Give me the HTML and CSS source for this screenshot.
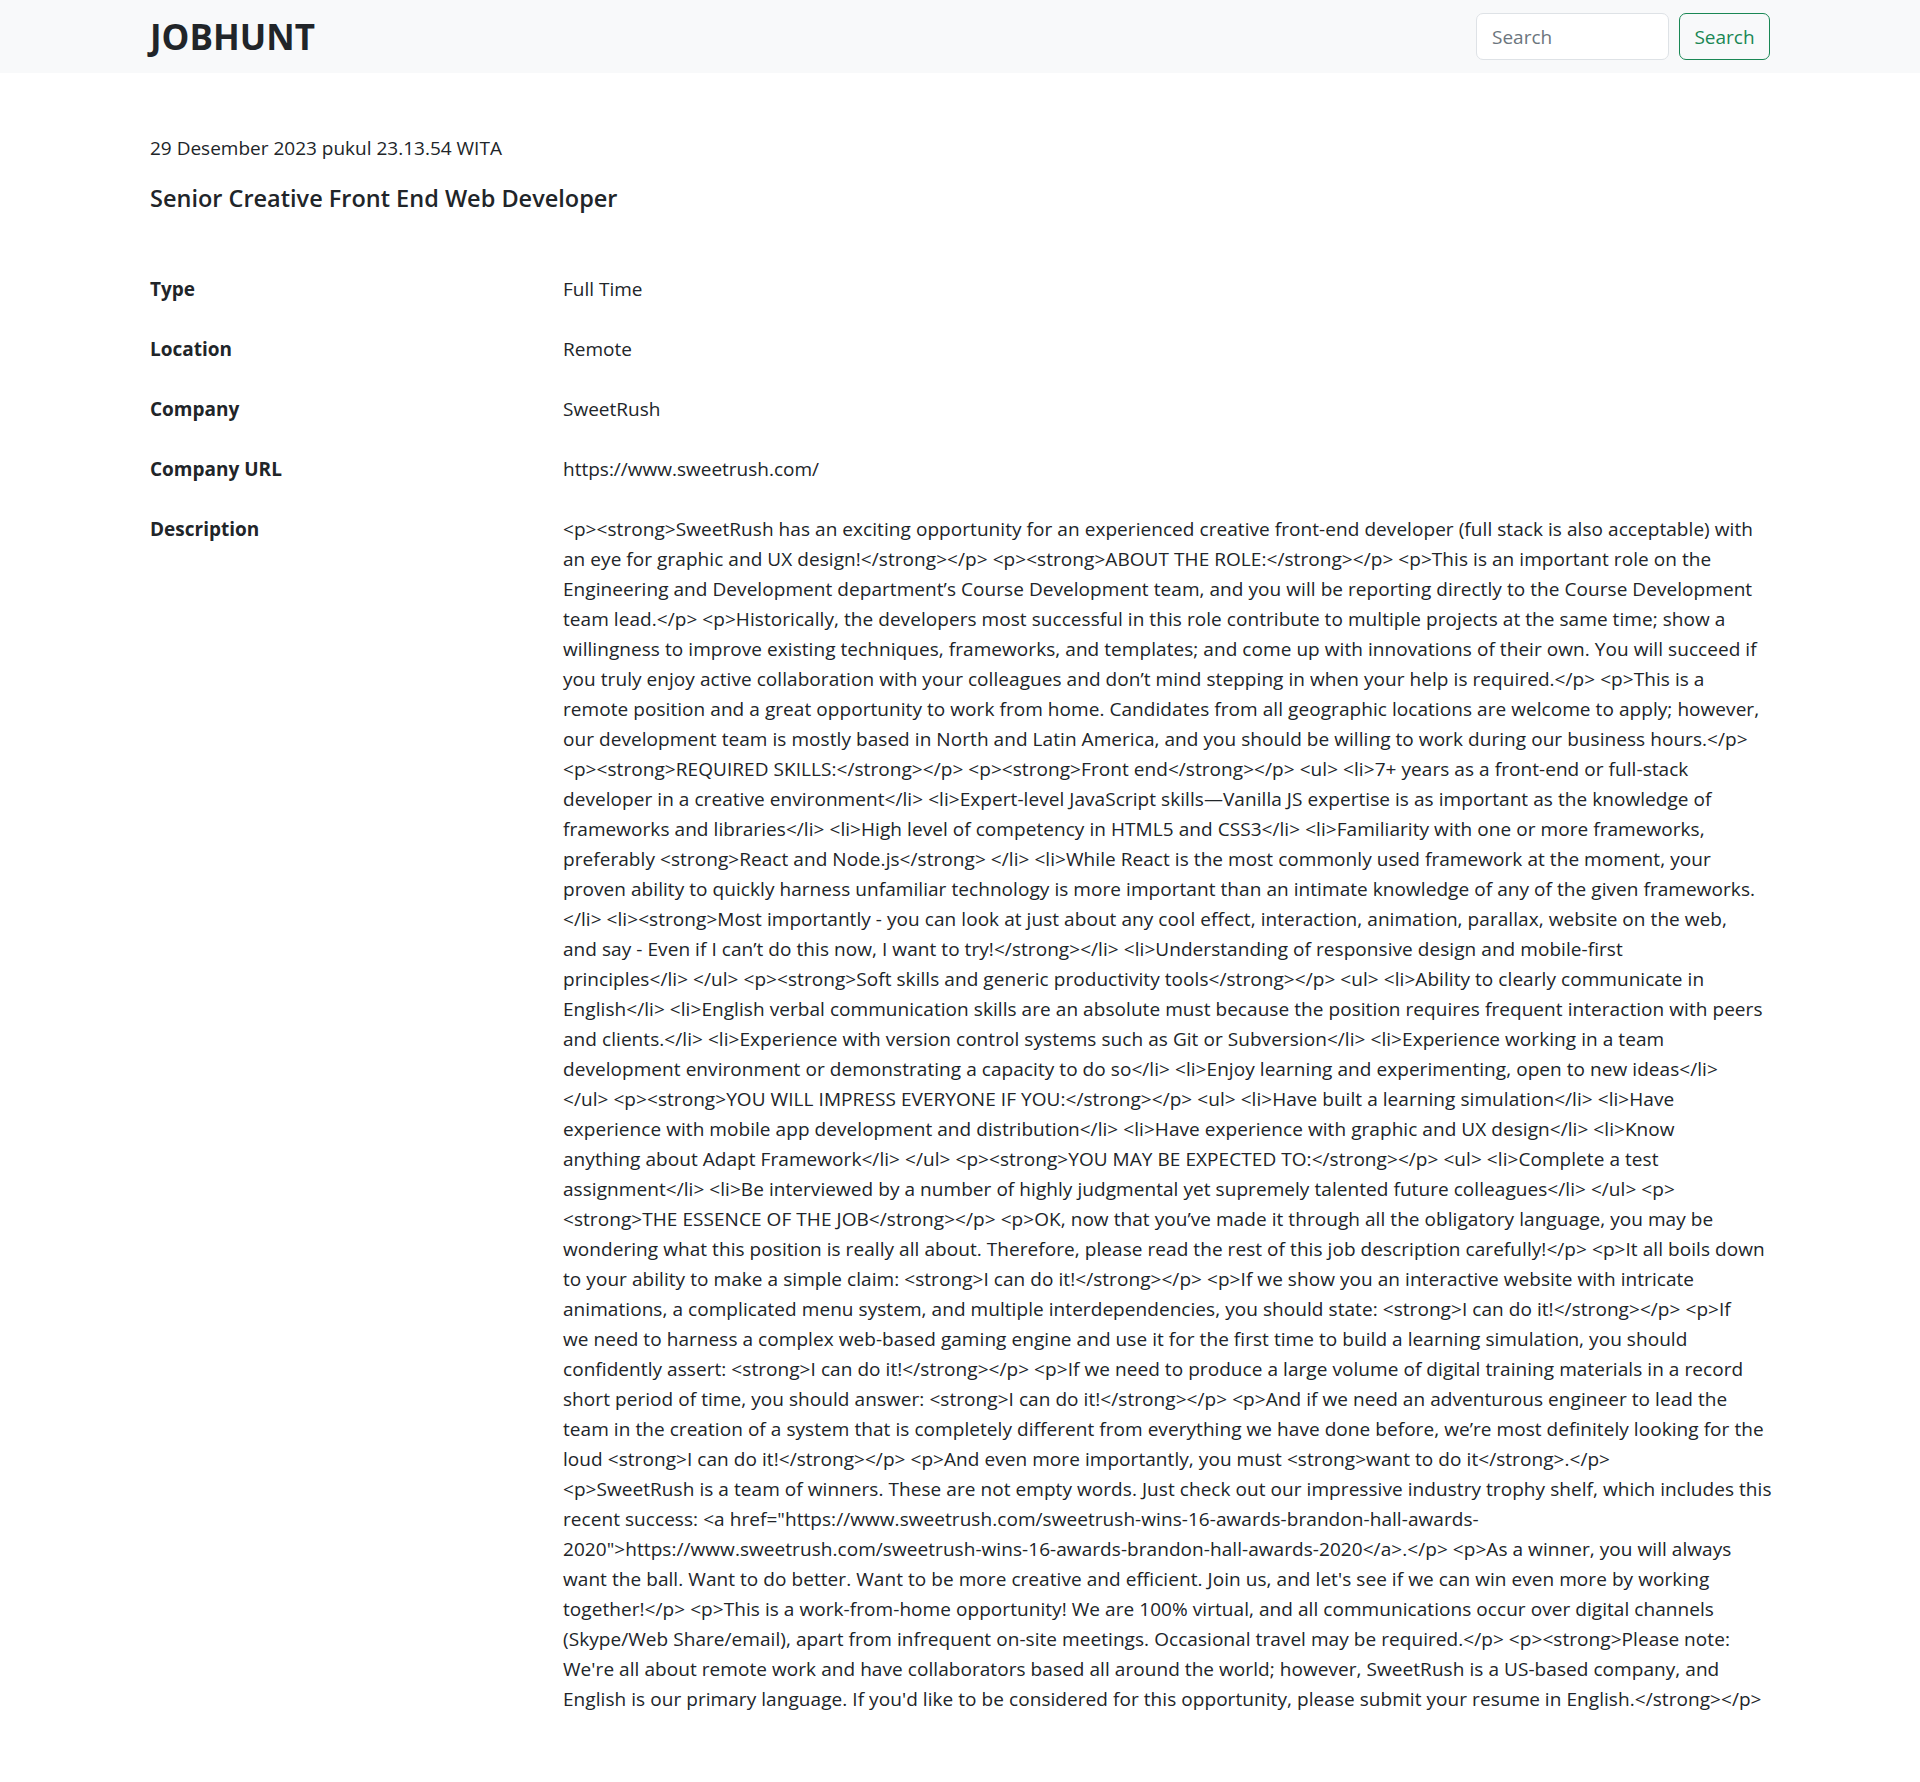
FILE: index.html
```html
<!DOCTYPE html>
<html lang="id">
<head>
<meta charset="utf-8">
<title>JOBHUNT</title>
<link rel="stylesheet" href="styles.css">
</head>
<body>
<nav class="navbar">
  <div class="nav-inner">
    <span class="brand">JOBHUNT</span>
    <form class="search">
      <input class="search-input" type="search" placeholder="Search">
      <button class="search-btn" type="button">Search</button>
    </form>
  </div>
</nav>
<main class="container">
  <p class="date">29 Desember 2023 pukul 23.13.54 WITA</p>
  <h5 class="title">Senior Creative Front End Web Developer</h5>
  <div class="details">
    <div class="row"><div class="label">Type</div><div class="value">Full Time</div></div>
    <div class="row"><div class="label">Location</div><div class="value">Remote</div></div>
    <div class="row"><div class="label">Company</div><div class="value">SweetRush</div></div>
    <div class="row"><div class="label">Company URL</div><div class="value">https://www.sweetrush.com/</div></div>
    <div class="row"><div class="label">Description</div><div class="value desc">&lt;p&gt;&lt;strong&gt;SweetRush has an exciting opportunity for an experienced creative front-end developer (full stack is also acceptable) with<br>an eye for graphic and UX design!&lt;/strong&gt;&lt;/p&gt; &lt;p&gt;&lt;strong&gt;ABOUT THE ROLE:&lt;/strong&gt;&lt;/p&gt; &lt;p&gt;This is an important role on the<br>Engineering and Development department’s Course Development team, and you will be reporting directly to the Course Development<br>team lead.&lt;/p&gt; &lt;p&gt;Historically, the developers most successful in this role contribute to multiple projects at the same time; show a<br>willingness to improve existing techniques, frameworks, and templates; and come up with innovations of their own. You will succeed if<br>you truly enjoy active collaboration with your colleagues and don’t mind stepping in when your help is required.&lt;/p&gt; &lt;p&gt;This is a<br>remote position and a great opportunity to work from home. Candidates from all geographic locations are welcome to apply; however,<br>our development team is mostly based in North and Latin America, and you should be willing to work during our business hours.&lt;/p&gt;<br>&lt;p&gt;&lt;strong&gt;REQUIRED SKILLS:&lt;/strong&gt;&lt;/p&gt; &lt;p&gt;&lt;strong&gt;Front end&lt;/strong&gt;&lt;/p&gt; &lt;ul&gt; &lt;li&gt;7+ years as a front-end or full-stack<br>developer in a creative environment&lt;/li&gt; &lt;li&gt;Expert-level JavaScript skills—Vanilla JS expertise is as important as the knowledge of<br>frameworks and libraries&lt;/li&gt; &lt;li&gt;High level of competency in HTML5 and CSS3&lt;/li&gt; &lt;li&gt;Familiarity with one or more frameworks,<br>preferably &lt;strong&gt;React and Node.js&lt;/strong&gt; &lt;/li&gt; &lt;li&gt;While React is the most commonly used framework at the moment, your<br>proven ability to quickly harness unfamiliar technology is more important than an intimate knowledge of any of the given frameworks.<br>&lt;/li&gt; &lt;li&gt;&lt;strong&gt;Most importantly - you can look at just about any cool effect, interaction, animation, parallax, website on the web,<br>and say - Even if I can’t do this now, I want to try!&lt;/strong&gt;&lt;/li&gt; &lt;li&gt;Understanding of responsive design and mobile-first<br>principles&lt;/li&gt; &lt;/ul&gt; &lt;p&gt;&lt;strong&gt;Soft skills and generic productivity tools&lt;/strong&gt;&lt;/p&gt; &lt;ul&gt; &lt;li&gt;Ability to clearly communicate in<br>English&lt;/li&gt; &lt;li&gt;English verbal communication skills are an absolute must because the position requires frequent interaction with peers<br>and clients.&lt;/li&gt; &lt;li&gt;Experience with version control systems such as Git or Subversion&lt;/li&gt; &lt;li&gt;Experience working in a team<br>development environment or demonstrating a capacity to do so&lt;/li&gt; &lt;li&gt;Enjoy learning and experimenting, open to new ideas&lt;/li&gt;<br>&lt;/ul&gt; &lt;p&gt;&lt;strong&gt;YOU WILL IMPRESS EVERYONE IF YOU:&lt;/strong&gt;&lt;/p&gt; &lt;ul&gt; &lt;li&gt;Have built a learning simulation&lt;/li&gt; &lt;li&gt;Have<br>experience with mobile app development and distribution&lt;/li&gt; &lt;li&gt;Have experience with graphic and UX design&lt;/li&gt; &lt;li&gt;Know<br>anything about Adapt Framework&lt;/li&gt; &lt;/ul&gt; &lt;p&gt;&lt;strong&gt;YOU MAY BE EXPECTED TO:&lt;/strong&gt;&lt;/p&gt; &lt;ul&gt; &lt;li&gt;Complete a test<br>assignment&lt;/li&gt; &lt;li&gt;Be interviewed by a number of highly judgmental yet supremely talented future colleagues&lt;/li&gt; &lt;/ul&gt; &lt;p&gt;<br>&lt;strong&gt;THE ESSENCE OF THE JOB&lt;/strong&gt;&lt;/p&gt; &lt;p&gt;OK, now that you’ve made it through all the obligatory language, you may be<br>wondering what this position is really all about. Therefore, please read the rest of this job description carefully!&lt;/p&gt; &lt;p&gt;It all boils down<br>to your ability to make a simple claim: &lt;strong&gt;I can do it!&lt;/strong&gt;&lt;/p&gt; &lt;p&gt;If we show you an interactive website with intricate<br>animations, a complicated menu system, and multiple interdependencies, you should state: &lt;strong&gt;I can do it!&lt;/strong&gt;&lt;/p&gt; &lt;p&gt;If<br>we need to harness a complex web-based gaming engine and use it for the first time to build a learning simulation, you should<br>confidently assert: &lt;strong&gt;I can do it!&lt;/strong&gt;&lt;/p&gt; &lt;p&gt;If we need to produce a large volume of digital training materials in a record<br>short period of time, you should answer: &lt;strong&gt;I can do it!&lt;/strong&gt;&lt;/p&gt; &lt;p&gt;And if we need an adventurous engineer to lead the<br>team in the creation of a system that is completely different from everything we have done before, we’re most definitely looking for the<br>loud &lt;strong&gt;I can do it!&lt;/strong&gt;&lt;/p&gt; &lt;p&gt;And even more importantly, you must &lt;strong&gt;want to do it&lt;/strong&gt;.&lt;/p&gt;<br>&lt;p&gt;SweetRush is a team of winners. These are not empty words. Just check out our impressive industry trophy shelf, which includes this<br>recent success: &lt;a href="https://www.sweetrush.com/sweetrush-wins-16-awards-brandon-hall-awards-<br>2020"&gt;https://www.sweetrush.com/sweetrush-wins-16-awards-brandon-hall-awards-2020&lt;/a&gt;.&lt;/p&gt; &lt;p&gt;As a winner, you will always<br>want the ball. Want to do better. Want to be more creative and efficient. Join us, and let's see if we can win even more by working<br>together!&lt;/p&gt; &lt;p&gt;This is a work-from-home opportunity! We are 100% virtual, and all communications occur over digital channels<br>(Skype/Web Share/email), apart from infrequent on-site meetings. Occasional travel may be required.&lt;/p&gt; &lt;p&gt;&lt;strong&gt;Please note:<br>We're all about remote work and have collaborators based all around the world; however, SweetRush is a US-based company, and<br>English is our primary language. If you'd like to be considered for this opportunity, please submit your resume in English.&lt;/strong&gt;&lt;/p&gt;</div></div>
  </div>
</main>
</body>
</html>
```

FILE: styles.css
```css
* { box-sizing: border-box; }

body {
  margin: 0;
  font-family: "Open Sans", "Noto Sans", sans-serif;
  font-size: 19px;
  line-height: 30px;
  color: #212529;
  background: #fff;
}

.navbar {
  background: #f8f9fa;
  height: 73px;
}

.nav-inner {
  max-width: 1650px;
  margin: 0 auto;
  padding: 0 15px;
  height: 100%;
  display: flex;
  align-items: center;
  justify-content: space-between;
}

.brand {
  font-size: 35px;
  font-weight: 700;
  line-height: 42px;
  color: #212529;
  margin-top: 1px;
}

.search {
  display: flex;
  gap: 10px;
  margin: 0;
}

.search-input {
  width: 193px;
  height: 47px;
  padding: 0 15px;
  border: 1px solid #dee2e6;
  border-radius: 7px;
  background: #fff;
  font-family: inherit;
  font-size: 19px;
  color: #212529;
  outline: none;
}

.search-input::placeholder {
  color: #6c757d;
}

.search-btn {
  width: 91px;
  height: 47px;
  padding: 0;
  border: 1px solid #198754;
  border-radius: 7px;
  background: transparent;
  color: #198754;
  font-family: inherit;
  font-size: 19px;
}

.container {
  max-width: 1650px;
  margin: 0 auto;
  padding: 60px 15px 53px;
}

.date {
  margin: 0;
  line-height: 30px;
}

.title {
  margin: 20px 0 0;
  font-size: 23.5px;
  font-weight: 600;
  line-height: 30px;
}

.details {
  margin-top: 46px;
}

.row {
  display: grid;
  grid-template-columns: 413px 1fr;
  padding: 15px 0;
}

.label {
  font-weight: 700;
}

.desc {
  white-space: nowrap;
  letter-spacing: 0.06px;
}
```
